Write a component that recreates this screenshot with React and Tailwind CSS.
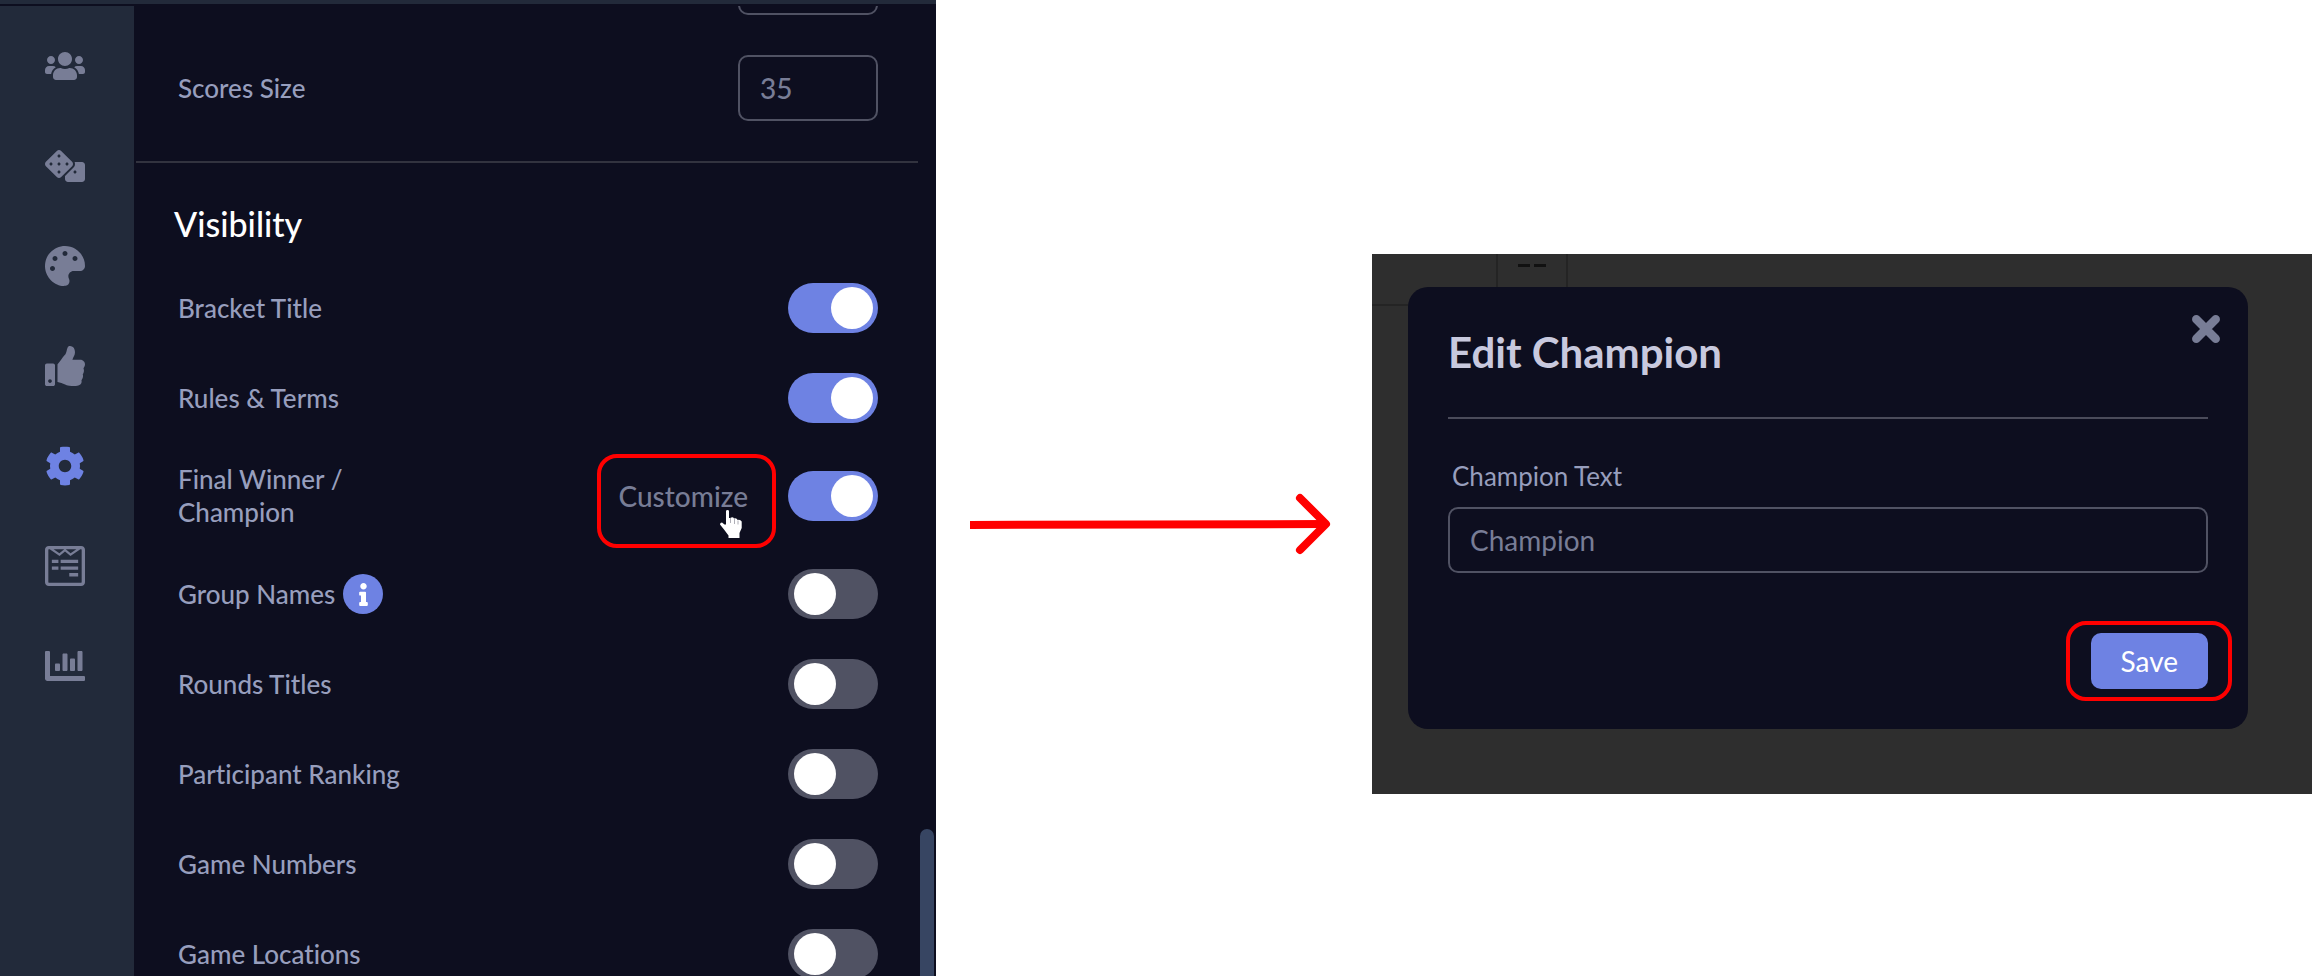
import React from 'react';
import {
  FaChartBar,
  FaCog,
  FaDice,
  FaInfo,
  FaPalette,
  FaThumbsUp,
  FaUsers,
  FaWpforms,
} from 'react-icons/fa';

const navItems = [
  { label: 'Participants', Icon: FaUsers },
  { label: 'Randomize', Icon: FaDice },
  { label: 'Theme', Icon: FaPalette },
  { label: 'Predictions', Icon: FaThumbsUp },
  { label: 'Settings', Icon: FaCog, active: true },
  { label: 'Forms', Icon: FaWpforms },
  { label: 'Statistics', Icon: FaChartBar },
];

const options = [
  { id: 'bracket-title', label: 'Bracket Title', on: true },
  { id: 'rules', label: 'Rules & Terms', on: true },
  { id: 'champion', label: 'Final Winner / Champion', on: true, customize: true },
  { id: 'group-names', label: 'Group Names', info: true },
  { id: 'rounds-titles', label: 'Rounds Titles' },
  { id: 'ranking', label: 'Participant Ranking' },
  { id: 'game-numbers', label: 'Game Numbers' },
  { id: 'game-locations', label: 'Game Locations' },
];

const Sidebar = () => (
  <nav className="w-[134px] shrink-0 bg-[#222a3a] pt-[10px] pr-1 flex flex-col items-center">
    {navItems.map(({ label, Icon, active }) => (
      <button
        key={label}
        type="button"
        aria-label={label}
        className={
          active
            ? 'h-[100px] w-full flex items-center justify-center text-[#6e82e3]'
            : 'h-[100px] w-full flex items-center justify-center text-[#787d96]'
        }
      >
        <Icon className="w-10 h-[46px]" />
      </button>
    ))}
  </nav>
);

const HandCursor = () => (
  <svg
    viewBox="0 0 22 28"
    className="absolute left-[101px] top-[31px] w-[22px] h-7 pointer-events-none"
    aria-hidden="true"
  >
    <path
      fill="#fff"
      d="M6 1.2Q6 0 7.5 0T9 1.2V8h1.2Q13 6.500 14 8.500Q16.500 7.500 17.700 10Q20 9 21.700 11.500V18L19.500 23V28H8.500V25.500L4 19.500L0 14.500Q0 12.500 2 12.500L4.500 14.500H6Z"
    />
    <path d="M10.500 8v5M14.500 9v5M18 10.500v4" stroke="#9a9aa4" strokeWidth="0.8" fill="none" />
  </svg>
);

const OptionRow = ({ option }) => (
  <div className="flex items-center py-5">
    <label
      htmlFor={option.id}
      className={option.customize ? 'w-[180px] text-[26px] leading-[33px]' : 'text-[26px] leading-[33px]'}
    >
      {option.label}
    </label>
    {option.info && (
      <button
        type="button"
        aria-label="About group names"
        className="ml-2 size-10 rounded-full bg-[#6e82e3] text-white flex items-center justify-center"
      >
        <FaInfo className="size-[23px]" />
      </button>
    )}
    <div className="ml-auto flex items-center gap-10">
      {option.customize && (
        <button type="button" className="relative text-[28px] leading-[34px] text-[#787d96]">
          Customize
          <span className="absolute -left-[22px] -right-[28px] -top-[25px] -bottom-[35px] border-4 border-[#ff0000] rounded-[20px]" />
          <HandCursor />
        </button>
      )}
      <input
        id={option.id}
        type="checkbox"
        defaultChecked={option.on}
        className="appearance-none w-[90px] h-[50px] pt-1 rounded-full bg-[#505263] checked:bg-[#6e82e3] before:block before:size-[42px] before:rounded-full before:bg-white before:ml-[6px] checked:before:ml-[43px]"
      />
    </div>
  </div>
);

const SettingsPanel = () => (
  <section className="h-screen overflow-hidden flex flex-col bg-[#0d0e1f] font-medium text-[#979ebd]">
    <div className="h-1 shrink-0 bg-[#222a3a]" />
    <div className="mt-[2px] flex-1 min-h-0 flex">
      <Sidebar />

      <div className="ml-[2px] flex-1 min-w-0 overflow-hidden">
        <div className="pl-[42px] pr-10">
          {/* previous setting, mostly scrolled out of view */}
          <div className="h-[9px] overflow-hidden flex items-end justify-end">
            <input
              aria-label="Names Size"
              className="w-[140px] h-[66px] shrink-0 border-2 border-[#505263] rounded-[10px] px-5"
            />
          </div>
          <div className="py-10 flex items-center justify-between">
            <label htmlFor="scores-size" className="text-[26px] leading-[33px]">
              Scores Size
            </label>
            <input
              id="scores-size"
              placeholder="35"
              className="w-[140px] h-[66px] border-2 border-[#505263] rounded-[10px] px-5 text-[28px] placeholder:text-[#787d96]"
            />
          </div>
        </div>

        <hr className="border-t-2 border-[#32333f]" />

        <div className="pl-[42px] pr-10">
          <h2 className="-ml-1 pt-10 pb-[18px] text-[34px] leading-[42px] text-white">Visibility</h2>
          {options.map((option) => (
            <OptionRow key={option.id} option={option} />
          ))}
        </div>
      </div>

      {/* scrollbar */}
      <div className="w-[18px] shrink-0 px-[2px] flex flex-col justify-end">
        <div className="h-[147px] rounded-t-full bg-[#374562]" />
      </div>
    </div>
  </section>
);

const Arrow = () => (
  <svg viewBox="0 0 368 64" className="w-full" fill="none" stroke="#ff0000" strokeWidth="8" aria-hidden="true">
    <path d="M0 33L354 32" />
    <path d="M330 6L356 32L330 58" strokeLinecap="round" strokeLinejoin="round" />
  </svg>
);

const ChampionModal = () => (
  <div
    role="dialog"
    aria-labelledby="modal-title"
    className="relative bg-[#0d0e1f] rounded-[20px] px-10 pt-10 pb-10"
  >
    <button type="button" aria-label="Close" className="absolute right-7 top-7 size-7 text-[#787d96]">
      <svg viewBox="0 0 28 28" fill="none" stroke="currentColor" strokeWidth="8.5" strokeLinecap="round">
        <path d="M4.300 4.300L23.700 23.700M23.700 4.300L4.300 23.700" />
      </svg>
    </button>
    <h1 id="modal-title" className="text-[42px] leading-[50px] font-bold text-[#c8c9de]">
      Edit Champion
    </h1>
    <hr className="mt-10 border-t-2 border-[#4a4b5a]" />
    <label htmlFor="champion-text" className="block mt-10 ml-1 text-[26px] leading-[34px] text-[#979ebd]">
      Champion Text
    </label>
    <input
      id="champion-text"
      placeholder="Champion"
      className="mt-[14px] w-full h-[66px] border-2 border-[#505263] rounded-[10px] px-5 text-[28px] placeholder:text-[#787d96]"
    />
    <div className="mt-[60px] flex justify-end">
      <button type="button" className="relative h-14 px-[30px] rounded-[10px] bg-[#6e82e3] text-[28px] text-white">
        Save
        <span className="absolute -left-[25px] -right-6 -top-3 -bottom-3 border-4 border-[#ff0000] rounded-[20px]" />
      </button>
    </div>
  </div>
);

const App = () => {
  return (
    <main className="grid grid-cols-[936fr_436fr_940fr] bg-white font-['Lato',sans-serif] [font-variant-ligatures:none]">
      <SettingsPanel />

      <div className="pl-[34px] pr-[34px] pt-[492px]">
        <Arrow />
      </div>

      <div className="pt-[254px]">
        <div className="h-[540px] bg-[#2e2e2e] flex flex-col">
          {/* bracket behind the dialog */}
          <div className="relative h-[33px] shrink-0">
            <div className="absolute left-0 top-0 h-[52px] w-[126px] border-r-2 border-b-2 border-[#242424]" />
            <div className="absolute left-[126px] top-0 h-[33px] w-[70px] border-r-2 border-[#242424] flex gap-1 justify-center pt-[10px]">
              <span className="h-[3px] w-3 bg-[#111111]" />
              <span className="h-[3px] w-3 bg-[#111111]" />
            </div>
          </div>
          <div className="pl-9 pr-16">
            <ChampionModal />
          </div>
        </div>
      </div>
    </main>
  );
};

export default App;
